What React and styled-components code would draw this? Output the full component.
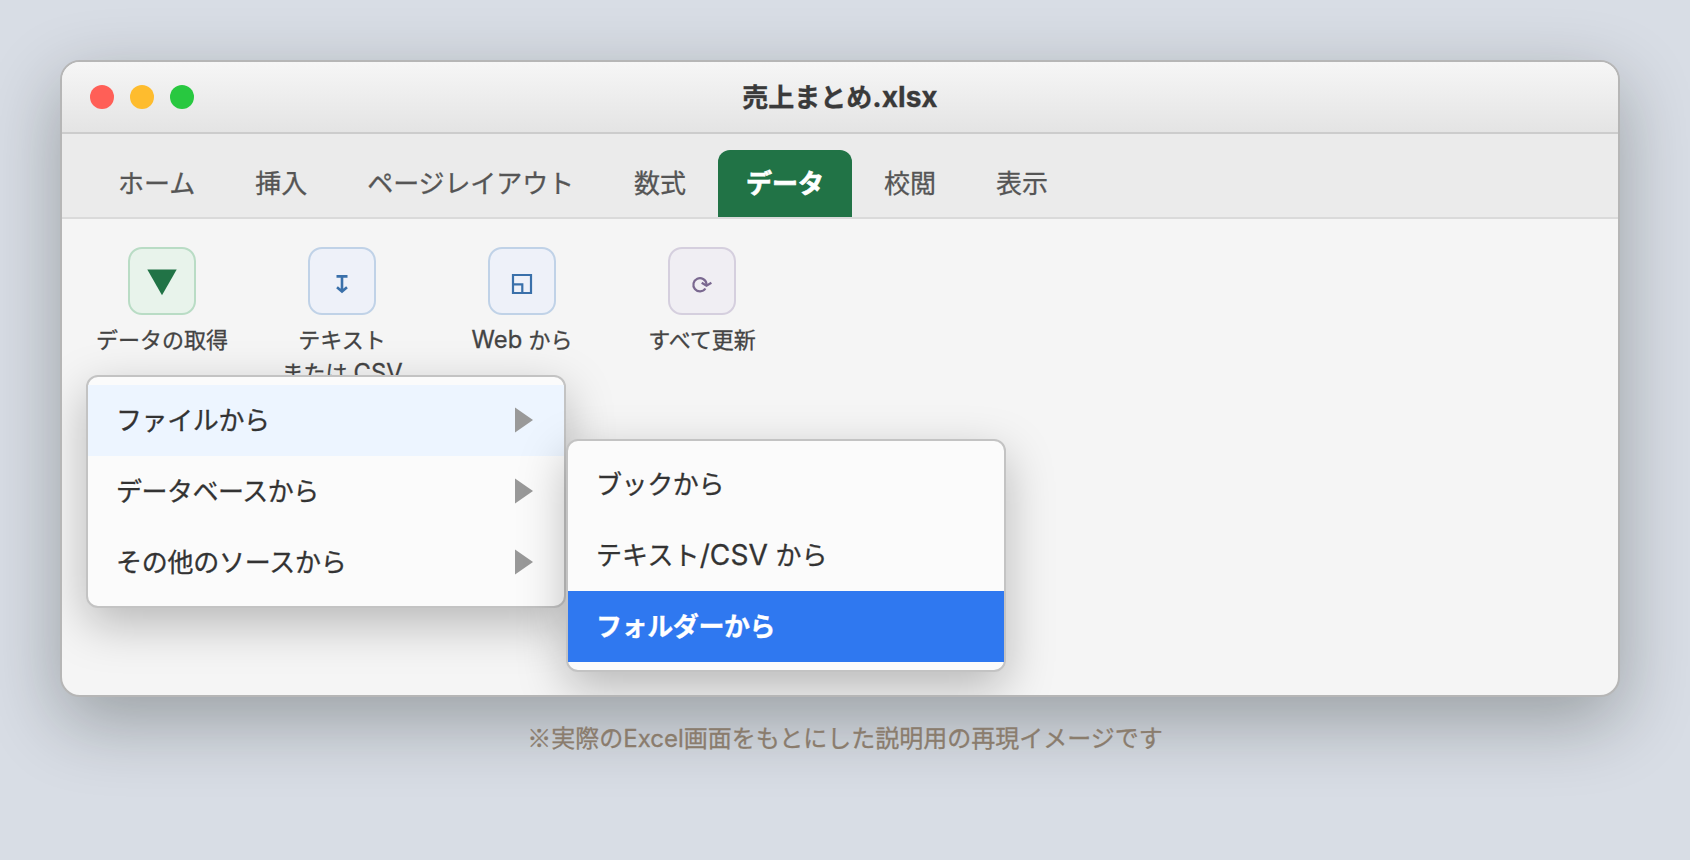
import React from "react";
import styled, { createGlobalStyle } from "styled-components";

const GlobalStyle = createGlobalStyle`
	* {
		box-sizing: border-box;
	}
	body {
		margin: 0;
		background: #d8dde5;
		font-family: Inter, "Noto Sans CJK JP", sans-serif;
		line-height: 1.5;
		-webkit-font-smoothing: antialiased;
		-webkit-text-stroke: 0.3px;
	}
`;

const Page = styled.div`
	height: 860px;
	padding: 60px 70px 0 60px;
	overflow: hidden;
`;

const Window = styled.div`
	width: 1560px;
	border: 2px solid #b6b6b6;
	border-radius: 20px;
	background: #f5f5f5;
	overflow: hidden;
	box-shadow: 0 24px 72px rgba(10, 18, 10, 0.3);
`;

const TitleBar = styled.div`
	display: grid;
	grid-template-columns: 1fr auto 1fr;
	align-items: center;
	height: 72px;
	padding: 0 28px;
	background: linear-gradient(#f6f6f6, #e4e4e4);
	border-bottom: 2px solid #cccccc;
`;

const Dots = styled.div`
	display: flex;
	gap: 16px;
`;

const Dot = styled.span`
	width: 24px;
	height: 24px;
	border-radius: 50%;
	background: ${props => props.$color};
`;

const Title = styled.div`
	padding-top: 1px;
	font-size: 26px;
	font-weight: 700;
	line-height: 39px;
	color: #3a3a3a;
`;

const Latin = styled.span`
	font-size: 1.08em;
	line-height: 1;
`;

const TabBar = styled.div`
	display: flex;
	align-items: flex-end;
	gap: 4px;
	height: 85px;
	padding: 0 28px;
	background: #ebebeb;
	border-bottom: 2px solid #dadada;
`;

const Tab = styled.div`
	padding: 14px 28px;
	border-radius: 12px 12px 0 0;
	font-size: 26px;
	line-height: 39px;
	letter-spacing: ${props => props.$spacing || "normal"};
	font-weight: ${props => (props.$active ? 700 : 400)};
	color: ${props => (props.$active ? "#ffffff" : "#555555")};
	background: ${props => (props.$active ? "#217346" : "transparent")};
	-webkit-text-stroke: ${props => (props.$active ? "0.7px" : "0.3px")};
`;

const Ribbon = styled.div`
	position: relative;
	display: flex;
	align-items: flex-start;
	gap: 36px;
	height: 476px;
	padding: 28px;
`;

const Tool = styled.div`
	display: flex;
	flex-direction: column;
	align-items: center;
	gap: 9px;
	width: 144px;
`;

const ToolIcon = styled.div`
	display: flex;
	align-items: center;
	justify-content: center;
	width: 68px;
	height: 68px;
	border: 2px solid ${props => props.$border};
	border-radius: 14px;
	color: ${props => props.$color};
	background: ${props => props.$bg};
`;

const ToolLabel = styled.div`
	font-size: 22px;
	line-height: 33px;
	color: #444444;
	text-align: center;
	white-space: pre;
`;

const Menu = styled.div`
	position: absolute;
	left: ${props => props.$left}px;
	top: ${props => props.$top}px;
	width: ${props => props.$width}px;
	padding: 8px 0;
	border: 2px solid #c3c3c3;
	border-radius: 12px;
	background: #fbfbfb;
	box-shadow: 0 16px 48px rgba(0, 0, 0, 0.25);
`;

const MenuItem = styled.div`
	display: flex;
	align-items: center;
	justify-content: space-between;
	height: 71px;
	padding: 0 31px 0 28px;
	font-size: 26px;
	line-height: 39px;
	white-space: pre;
	letter-spacing: ${props => props.$spacing || "-0.4px"};
	font-weight: ${props => (props.$selected ? 700 : 400)};
	color: ${props => (props.$selected ? "#ffffff" : "#333333")};
	background: ${props => (props.$selected ? "#2f78f0" : props.$open ? "#edf5ff" : "transparent")};
`;

const ArrowIcon = styled.svg`
	margin-bottom: 2px;
`;

const Note = styled.div`
	width: 1570px;
	margin-top: 24px;
	font-size: 24px;
	line-height: 36px;
	color: #8a7c6d;
	text-align: center;
`;

const NoteMark = styled.span`
	font-family: "Noto Sans CJK JP", sans-serif;
	line-height: 1;
`;

const tabs = [
	{ name: "ホーム" },
	{ name: "挿入" },
	{ name: "ページレイアウト", spacing: "-0.1px" },
	{ name: "数式" },
	{ name: "データ", active: true },
	{ name: "校閲" },
	{ name: "表示" },
];

const green = { color: "#217346", bg: "#e8f3eb", border: "#b9dcc5" };
const blue = { color: "#3a70aa", bg: "#eef1f9", border: "#c0d2e7" };
const purple = { color: "#7a6890", bg: "#f0eef3", border: "#d5cfde" };

const tools = [
	{ id: "get", label: "データの取得", tone: green, icon: <GetDataIcon /> },
	{ id: "text", label: <>{"テキスト\nまたは "}<Latin>CSV</Latin></>, tone: blue, icon: <TextIcon /> },
	{ id: "web", label: <><Latin>Web</Latin> から</>, tone: blue, icon: <WebIcon /> },
	{ id: "refresh", label: "すべて更新", tone: purple, icon: <RefreshIcon /> },
];

function GetDataIcon() {
	return (
		<svg width="64" height="64" viewBox="0 0 64 64">
			<path d="M17.3 20.5H46.7L32 46.2Z" fill="currentColor" />
		</svg>
	);
}

function TextIcon() {
	return (
		<svg width="64" height="64" viewBox="0 0 64 64" fill="none" stroke="currentColor" strokeWidth="2.6">
			<path d="M26.5 27.4H37.5M32 27.4V43M27 38.3L32 42.6L37 38.3" />
		</svg>
	);
}

function WebIcon() {
	return (
		<svg width="64" height="64" viewBox="0 0 64 64" fill="none" stroke="currentColor" strokeWidth="2.2">
			<path d="M23 26H41V44H23ZM23 35.3H32.3V44" />
		</svg>
	);
}

function RefreshIcon() {
	return (
		<svg width="64" height="64" viewBox="0 0 64 64" fill="none" stroke="currentColor" strokeWidth="2.2">
			<path d="M35.4 39.5A6.6 6.6 0 1 1 36.5 34.8V36" />
			<path d="M31.7 33.7L36.5 36.7L41.4 33.8" />
		</svg>
	);
}

function Arrow() {
	return (
		<ArrowIcon width="18" height="26" viewBox="0 0 18 26">
			<path d="M0 0.5V25.5L18 13Z" fill="#999999" />
		</ArrowIcon>
	);
}

export default function App() {
	return (
		<Page>
			<GlobalStyle />
			<Window>
				<TitleBar>
					<Dots>
						<Dot $color="#ff5f57" />
						<Dot $color="#febc2e" />
						<Dot $color="#28c840" />
					</Dots>
					<Title>売上まとめ<Latin>.xlsx</Latin></Title>
				</TitleBar>
				<TabBar>
					{tabs.map(tab => (
						<Tab key={tab.name} $active={tab.active} $spacing={tab.spacing}>
							{tab.name}
						</Tab>
					))}
				</TabBar>
				<Ribbon>
					{tools.map(tool => (
						<Tool key={tool.id}>
							<ToolIcon $color={tool.tone.color} $bg={tool.tone.bg} $border={tool.tone.border}>
								{tool.icon}
							</ToolIcon>
							<ToolLabel>{tool.label}</ToolLabel>
						</Tool>
					))}
					<Menu $left={24} $top={156} $width={480}>
						<MenuItem $open>ファイルから<Arrow /></MenuItem>
						<MenuItem $spacing="-0.5px">データベースから<Arrow /></MenuItem>
						<MenuItem $spacing="-0.25px">その他のソースから<Arrow /></MenuItem>
					</Menu>
					<Menu $left={504} $top={220} $width={440}>
						<MenuItem>ブックから</MenuItem>
						<MenuItem $spacing="0.1px"><span>テキスト<Latin>/CSV</Latin> から</span></MenuItem>
						<MenuItem $selected>フォルダーから</MenuItem>
					</Menu>
				</Ribbon>
			</Window>
			<Note><NoteMark>※</NoteMark>実際のExcel画面をもとにした説明用の再現イメージです</Note>
		</Page>
	);
}
